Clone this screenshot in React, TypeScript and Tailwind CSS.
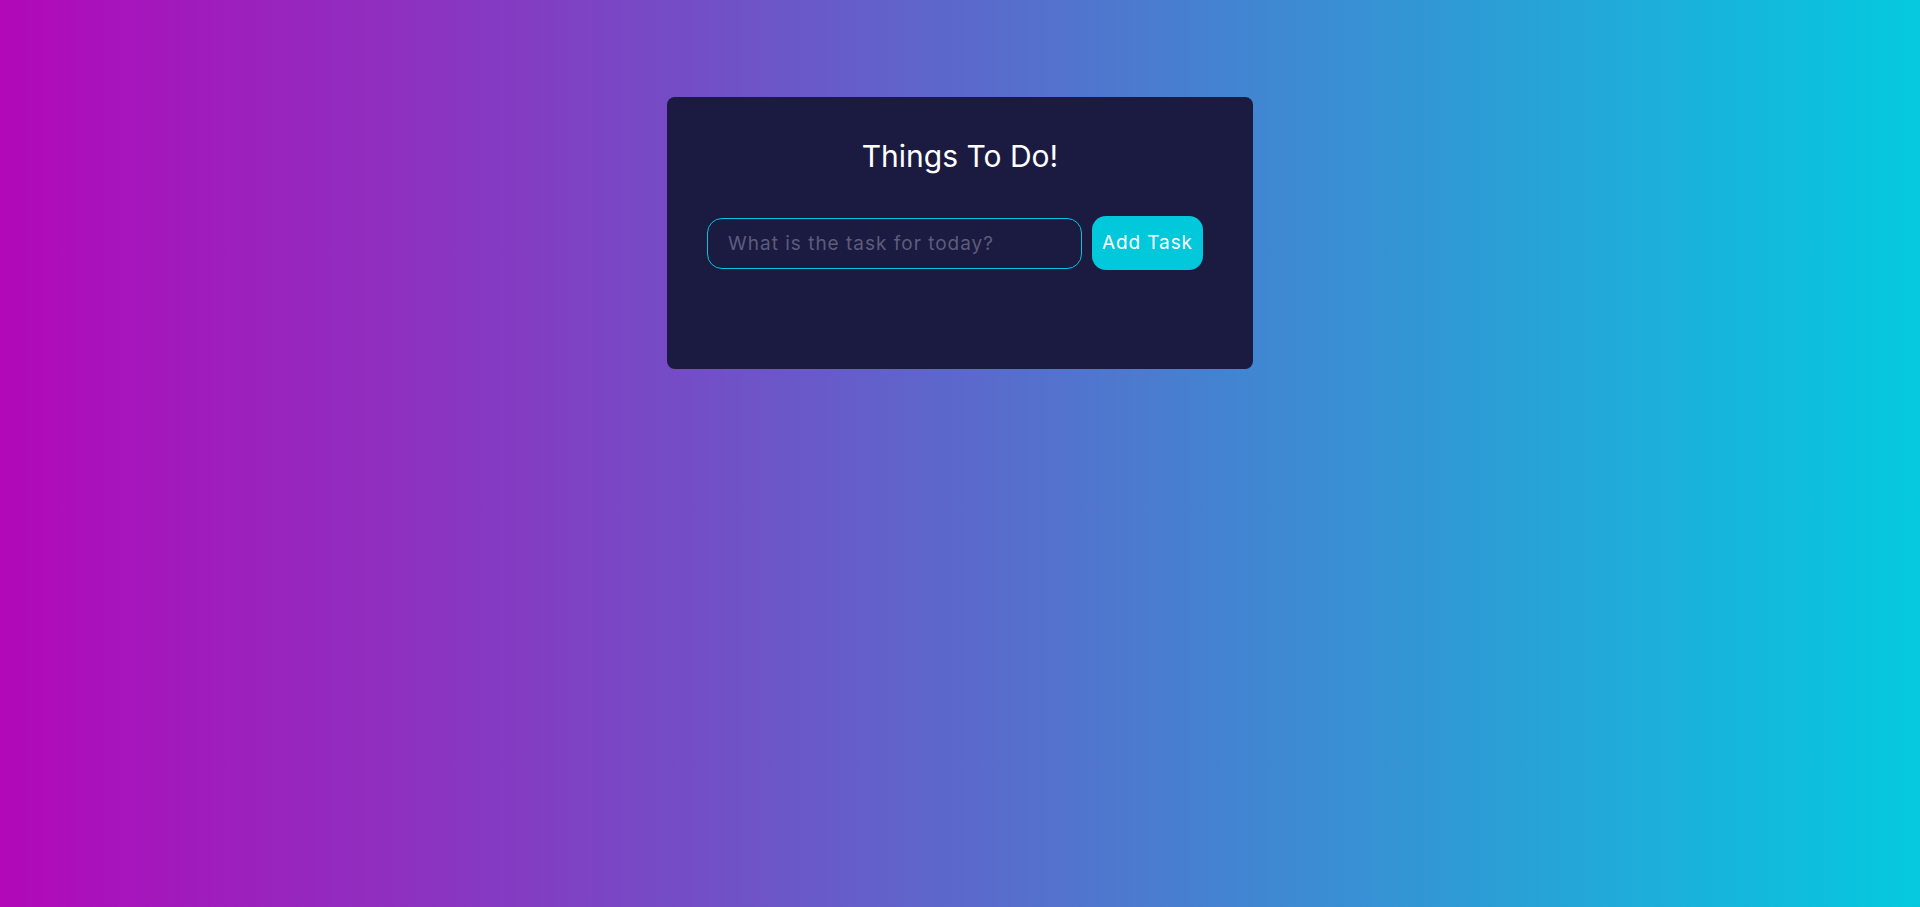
export default function App() {
  return (
    <div
      className="min-h-screen w-full bg-[linear-gradient(90deg,#b208b8,#05c9df)] pt-[97px]"
      style={{ fontFamily: "Inter, 'Open Sans', sans-serif" }}
    >
      {/* Todo card */}
      <div className="mx-auto h-[272px] w-[586px] rounded-lg bg-[#1b1a40] px-10 pt-[41px]">
        <h1 className="text-center text-[30px] leading-[36px] font-normal text-white">
          Things To Do!
        </h1>

        <form className="mt-[42px] flex h-[54px] items-center gap-[10px]" onSubmit={(e) => e.preventDefault()}>
          <input
            type="text"
            placeholder="What is the task for today?"
            className="h-[51px] w-[375px] rounded-[15px] border border-[#06c4dd] bg-transparent px-5 text-[19px] tracking-[1px] text-white outline-none placeholder:text-[#5d5c7d]"
          />
          <button
            type="submit"
            className="flex h-[54px] w-[111px] items-center justify-center rounded-[14px] bg-[#02c8dc] text-[19px] tracking-[0.9px] text-white"
          >
            Add Task
          </button>
        </form>
      </div>
    </div>
  );
}
